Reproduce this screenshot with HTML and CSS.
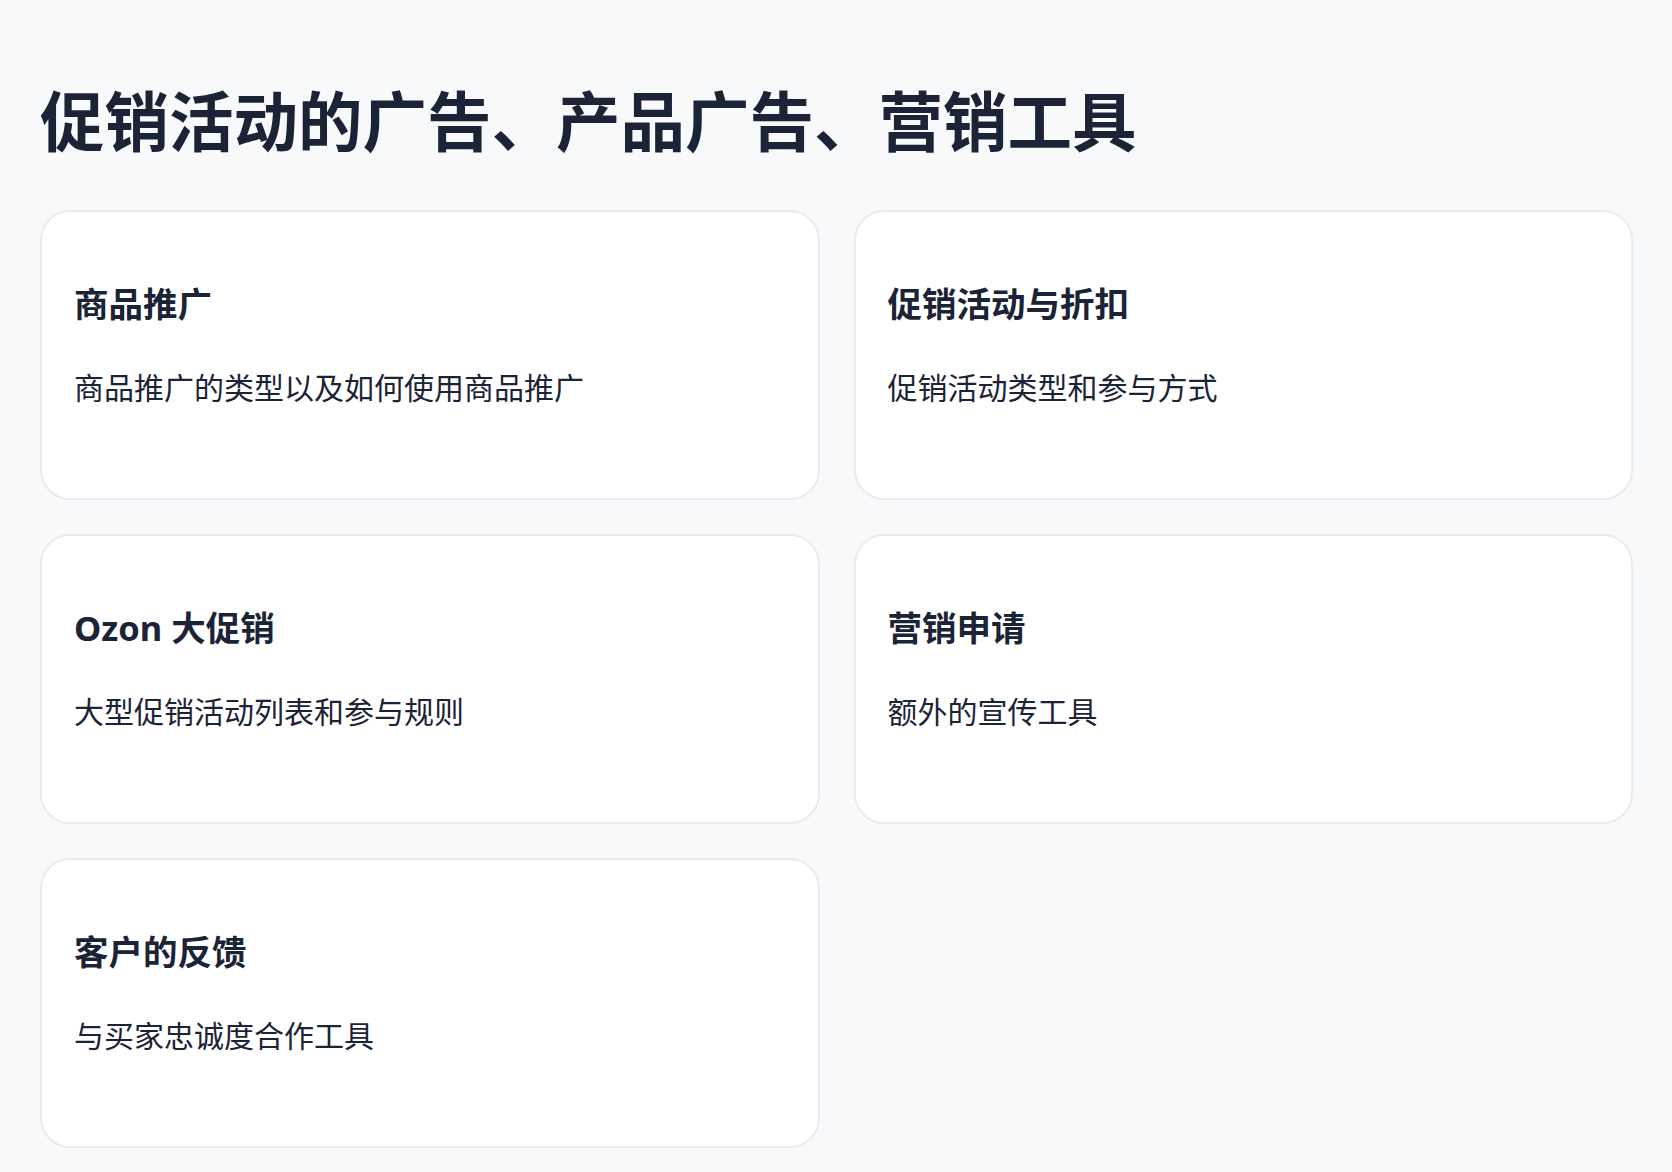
FILE: index.html
```html
<!DOCTYPE html>
<html lang="zh-CN">
<head>
  <meta charset="UTF-8" />
  <meta name="viewport" content="width=device-width, initial-scale=1.0"/>
  <title>营销工具</title>
  <link rel="stylesheet" href="styles.css">
</head>
<body>

<main class="page">
  <h1 class="page-title">促销活动的广告、产品广告、营销工具</h1>

  <div class="card-grid">
    <a class="card" href="#">
      <h2 class="card-title">商品推广</h2>
      <p class="card-desc">商品推广的类型以及如何使用商品推广</p>
    </a>
    <a class="card" href="#">
      <h2 class="card-title">促销活动与折扣</h2>
      <p class="card-desc">促销活动类型和参与方式</p>
    </a>
    <a class="card" href="#">
      <h2 class="card-title">Ozon 大促销</h2>
      <p class="card-desc">大型促销活动列表和参与规则</p>
    </a>
    <a class="card" href="#">
      <h2 class="card-title">营销申请</h2>
      <p class="card-desc">额外的宣传工具</p>
    </a>
    <a class="card" href="#">
      <h2 class="card-title">客户的反馈</h2>
      <p class="card-desc">与买家忠诚度合作工具</p>
    </a>
  </div>
</main>

</body>
</html>
```

FILE: styles.css
```css
body {
  margin: 0;
  background: #f8f9fb;
  color: #1b2336;
  font-family: "Noto Sans", "Noto Sans CJK SC", sans-serif;
}

.page { padding: 83px 39px 40px 40px; }

.page-title {
  margin: 0 0 50px;
  font-size: 64.5px;
  line-height: 1.2;
  font-weight: 700;
}

.card-grid {
  display: grid;
  grid-template-columns: 1fr 1fr;
  gap: 34px;
}

.card {
  display: block;
  height: 290px;
  box-sizing: border-box;
  padding: 66px 32px 32px;
  background: #fff;
  border: 2px solid #e8ebef;
  border-radius: 30px;
  color: inherit;
  text-decoration: none;
}

.card-title {
  margin: 0 0 35px;
  font-size: 34.5px;
  line-height: 1.5;
  font-weight: 700;
}

.card-desc {
  margin: 0;
  font-size: 30px;
  line-height: 1.5;
  font-weight: 400;
}
```
